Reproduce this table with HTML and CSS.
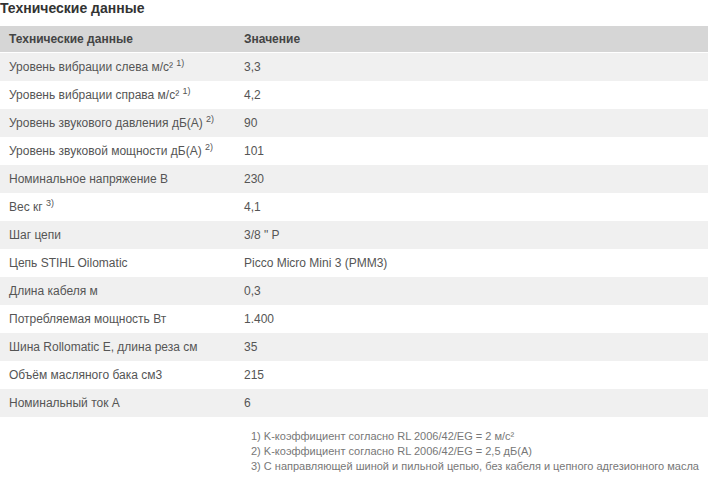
FILE: index.html
```html
<!DOCTYPE html>
<html lang="ru">
<head>
<meta charset="utf-8">
<title>Технические данные</title>
<link rel="stylesheet" href="styles.css">
</head>
<body>
<h2 class="title">Технические данные</h2>
<table class="spec">
  <thead>
    <tr><th class="c1">Технические данные</th><th>Значение</th></tr>
  </thead>
  <tbody>
    <tr><td class="c1">Уровень вибрации слева м/с² <sup>1)</sup></td><td>3,3</td></tr>
    <tr><td class="c1">Уровень вибрации справа м/с² <sup>1)</sup></td><td>4,2</td></tr>
    <tr><td class="c1">Уровень звукового давления дБ(А) <sup>2)</sup></td><td>90</td></tr>
    <tr><td class="c1">Уровень звуковой мощности дБ(А) <sup>2)</sup></td><td>101</td></tr>
    <tr><td class="c1">Номинальное напряжение В</td><td>230</td></tr>
    <tr><td class="c1">Вес кг <sup>3)</sup></td><td>4,1</td></tr>
    <tr><td class="c1">Шаг цепи</td><td>3/8 " P</td></tr>
    <tr><td class="c1">Цепь STIHL Oilomatic</td><td>Picco Micro Mini 3 (PMM3)</td></tr>
    <tr><td class="c1">Длина кабеля м</td><td>0,3</td></tr>
    <tr><td class="c1">Потребляемая мощность Вт</td><td>1.400</td></tr>
    <tr><td class="c1">Шина Rollomatic E, длина реза см</td><td>35</td></tr>
    <tr><td class="c1">Объём масляного бака см3</td><td>215</td></tr>
    <tr><td class="c1">Номинальный ток А</td><td>6</td></tr>
  </tbody>
</table>
<div class="notes">
  <p>1) K-коэффициент согласно RL 2006/42/EG = 2 м/с²</p>
  <p>2) K-коэффициент согласно RL 2006/42/EG = 2,5 дБ(A)</p>
  <p>3) С направляющей шиной и пильной цепью, без кабеля и цепного адгезионного масла</p>
</div>
</body>
</html>
```
FILE: styles.css
```css
html, body {
  margin: 0;
  padding: 0;
  background: #fff;
}
body {
  font-family: "Liberation Sans", Arial, sans-serif;
  color: #555;
  width: 721px;
}
.title {
  margin: 0;
  padding: 0;
  height: 26px;
  line-height: 17px;
  font-size: 14px;
  font-weight: bold;
  color: #333;
}
.spec {
  width: 708px;
  border-collapse: collapse;
  font-size: 12px;
}
.spec th {
  background: #d6d6d6;
  height: 26px;
  padding: 0 0 0 9px;
  text-align: left;
  font-weight: bold;
  color: #444;
  border-bottom: 1px solid #fff;
}
.spec td {
  height: 28px;
  padding: 0 0 0 9px;
  text-align: left;
  vertical-align: middle;
}
.spec .c1 {
  width: 226px;
}
.spec tbody tr:nth-child(odd) td {
  background: #f0f0f0;
}
.spec sup {
  font-size: 9px;
  line-height: 0;
  vertical-align: 5px;
}
.notes {
  padding: 12px 0 0 251px;
  font-size: 11px;
  color: #777;
}
.notes p {
  margin: 0;
  line-height: 15px;
}
```
